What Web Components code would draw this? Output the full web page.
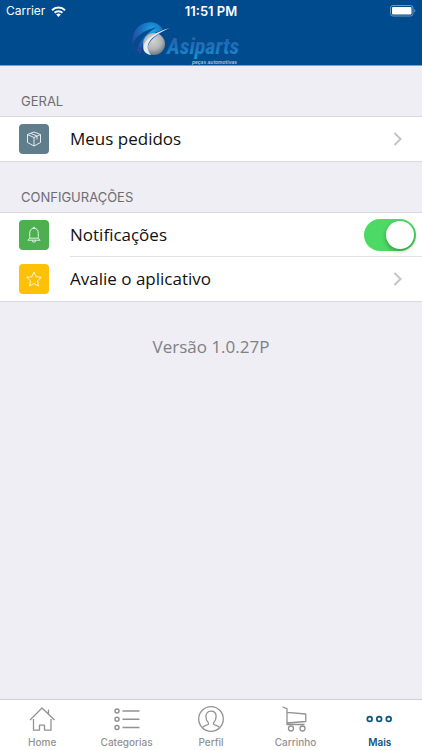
<!DOCTYPE html>
<html lang="pt-BR">
<head>
<meta charset="utf-8">
<meta name="viewport" content="width=device-width, initial-scale=1">
<title>Asiparts</title>
<style>
  :root {
    --as-brand: #004b8d;
    --as-bg: #efeef4;
    --as-line: #d9d9de;
    --as-muted: #6d6d72;
    --as-tab: #929292;
    --as-tab-active: #11587e;
    --as-ui: Inter, "Liberation Sans", sans-serif;
    --as-text: "Open Sans", "Noto Sans", sans-serif;
  }
  body { margin: 0; background: var(--as-bg); }
</style>
</head>
<body>
<as-app>
  <as-header slot="header" carrier="Carrier" time="11:51 PM"></as-header>
  <as-group label="Geral">
    <as-row label="Meus pedidos" icon="box" color="#607d8b"></as-row>
  </as-group>
  <as-group label="Configurações">
    <as-row label="Notificações" icon="bell" color="#4caf50" toggle></as-row>
    <as-row label="Avalie o aplicativo" icon="star" color="#ffc107"></as-row>
  </as-group>
  <as-version>Versão 1.0.27P</as-version>
  <as-tabbar slot="footer">
    <as-tab icon="home">Home</as-tab>
    <as-tab icon="list">Categorias</as-tab>
    <as-tab icon="user">Perfil</as-tab>
    <as-tab icon="cart">Carrinho</as-tab>
    <as-tab icon="more" active>Mais</as-tab>
  </as-tabbar>
</as-app>

<script>
// Line icons, all stroked with currentColor.
const ICONS = {
  box: `<svg width="18" height="18" viewBox="0 0 18 18"><path d="M9 2 15.500 4.500V12.500L9 16 2.500 12.500V4.500ZM2.500 4.500 9 7.500 15.500 4.500M9 7.500V16M5.500 3.300 12 6V9.500"/></svg>`,
  bell: `<svg width="18" height="18" viewBox="0 0 18 18"><path d="M8 2.200a1 1 0 0 1 2 0M2.800 14.200c1.400-.8 1.900-2 1.900-3.700V7.300C4.700 4.200 6.300 2.300 9 2.300S13.300 4.200 13.300 7.300v3.200c0 1.700.5 2.900 1.900 3.700ZM4.500 12.200h9M7.200 14.400a1.800 1.800 0 0 0 3.600 0"/></svg>`,
  star: `<svg width="18" height="18" viewBox="0 0 18 18"><path d="m9 2 2.100 4.700 5.200.6-3.800 3.600 1 5.100L9 13.500 4.500 16l1-5.100L1.700 7.300l5.200-.6Z"/></svg>`,
  home: `<svg width="28" height="28" viewBox="0 0 28 28"><path d="M2 15 14 3 26.500 15M20.500 9V4.500M5.500 14V25.200H11.500V20.200H16.500V25.200H23V14"/></svg>`,
  list: `<svg width="28" height="28" viewBox="0 0 28 28"><g stroke-width="1.500"><circle cx="4" cy="6" r="2"/><circle cx="4" cy="14.300" r="2"/><circle cx="4" cy="22.600" r="2"/><path d="M9.500 6H26.500M9.500 14.300H26.500M9.500 22.600H26.500"/></g></svg>`,
  user: `<svg width="28" height="28" viewBox="0 0 28 28"><circle cx="14" cy="14" r="12.300"/><path d="M5.500 22.500c1-1.500 2.800-1.900 4.600-2.500 1.500-.5 1.700-1.600 1-2.700-1.600-1.500-2.200-3.200-2.200-5.800C8.900 8.200 10.900 6.200 14 6.200s5.100 2 5.100 5.300c0 2.600-.6 4.300-2.200 5.800-.7 1.100-.5 2.200 1 2.700 1.800.6 3.600 1 4.600 2.500"/></svg>`,
  cart: `<svg width="28" height="28" viewBox="0 0 28 28"><path d="M1.500 2 6 3.600V19.500H23.500M6 7.300 24.800 9V16.500L6 18"/><circle cx="10" cy="23.500" r="2.500"/><circle cx="21.500" cy="23.500" r="2.500"/></svg>`,
  more: `<svg width="28" height="28" viewBox="0 0 28 28"><g stroke-width="1.700"><circle cx="3.700" cy="14" r="2.400"/><circle cx="13.200" cy="14" r="2.400"/><circle cx="22.700" cy="14" r="2.400"/></g></svg>`,
};

const ICON_CSS = `svg { display: block; fill: none; stroke: currentColor; stroke-linejoin: round; }`;

class AsElement extends HTMLElement {
  constructor() {
    super();
    this.attachShadow({ mode: "open" });
  }
  connectedCallback() {
    this.shadowRoot.innerHTML = this.render();
  }
}

class AsApp extends AsElement {
  render() {
    return `
      <style>
        :host { display: flex; flex-direction: column; min-height: 100vh; }
        main { flex: 1; }
      </style>
      <slot name="header"></slot>
      <main><slot></slot></main>
      <slot name="footer"></slot>`;
  }
}

class AsHeader extends AsElement {
  render() {
    return `
      <style>
        :host {
          display: block; background: var(--as-brand); color: #fff;
          border-bottom: 1px solid #7d9fc4; font: 12px/22px var(--as-ui);
        }
        .status {
          display: grid; grid-template-columns: 1fr auto 1fr; align-items: center;
          height: 22px; padding: 0 6px;
        }
        .carrier { display: flex; align-items: center; gap: 6px; }
        time { font-weight: 600; font-size: 13px; }
        .battery { justify-self: end; }
        svg { display: block; }
        .logo { margin: 0 auto; }
      </style>
      <header>
        <div class="status">
          <span class="carrier">${this.getAttribute("carrier")}
            <svg width="15" height="11" viewBox="0 0 15 11" aria-label="Wi-Fi">
              <g fill="none" stroke="#fff" stroke-width="2">
                <path d="M1 4.200a9.200 9.200 0 0 1 13 0"/><path d="M3.600 6.800a5.500 5.500 0 0 1 7.800 0"/>
              </g>
              <path fill="#fff" d="M5.200 8.600a3.300 3.300 0 0 1 4.600 0L7.500 11Z"/>
            </svg>
          </span>
          <time>${this.getAttribute("time")}</time>
          <svg class="battery" width="26" height="12" viewBox="0 0 26 12" aria-label="Bateria">
            <rect x=".5" y=".5" width="22.500" height="10.500" rx="2.500" fill="none" stroke="#6f98c0"/>
            <rect x="2" y="2" width="19.500" height="7.500" rx="1" fill="#fff"/>
            <path d="M24.200 4a2 2 0 0 1 0 3.600Z" fill="#6f98c0"/>
          </svg>
        </div>
        <svg class="logo" width="158" height="43" viewBox="0 0 158 43" role="img" aria-label="Asiparts peças automotivas">
          <defs>
            <radialGradient id="globe" cx=".65" cy=".25" r=".7">
              <stop offset="0" stop-color="#1fa6e0"/><stop offset=".5" stop-color="#1770c0"/><stop offset="1" stop-color="#28479c"/>
            </radialGradient>
            <radialGradient id="ball" cx=".45" cy=".35" r=".65">
              <stop offset="0" stop-color="#d4d4d4"/><stop offset=".6" stop-color="#b2b4b7"/><stop offset="1" stop-color="#6d7a88"/>
            </radialGradient>
            <linearGradient id="word" x1="0" y1="0" x2="0" y2="1">
              <stop offset="0" stop-color="#3659ab"/><stop offset=".5" stop-color="#1d70bb"/><stop offset="1" stop-color="#1b94d2"/>
            </linearGradient>
          </defs>
          <path fill="url(#globe)" d="M9 32C1 27-2 19 2 11 7-1 25-4 31 8 19 11 9 20 9 32Z"/>
          <path fill="#07498d" d="M1 21C5 13 13 8 25 5 15 11 8 17 5 28 3 26 1 24 1 21Z"/>
          <circle cx="22" cy="22" r="11" fill="url(#ball)"/>
          <path fill="#0a4888" d="M13 30C11 20 19 11 37 6 22 14 14 20 15 32Z"/>
          <path fill="#e4edf5" d="M19 33C6 31 8 14 38 6 21 13 10 22 19 33Z"/>
          <text x="35" y="32" fill="url(#word)" font-family="'Roboto Condensed', 'Liberation Sans', sans-serif" font-style="italic" font-weight="bold" font-size="22">Asiparts</text>
          <text x="60" y="42" fill="#a9bfd8" font-family="'Liberation Sans', sans-serif" font-style="italic" font-weight="bold" font-size="5">peças automotivas</text>
        </svg>
      </header>`;
  }
}

class AsGroup extends AsElement {
  render() {
    return `
      <style>
        :host { display: block; }
        h2 {
          margin: 0; padding: 26px 21px 6px; color: var(--as-muted);
          font: 13px/18px var(--as-ui); text-transform: uppercase;
        }
        .rows {
          background: #fff;
          border-top: 1px solid var(--as-line); border-bottom: 1px solid var(--as-line);
        }
      </style>
      <section>
        <h2>${this.getAttribute("label")}</h2>
        <div class="rows"><slot></slot></div>
      </section>`;
  }
}

class AsRow extends AsElement {
  render() {
    const toggle = this.hasAttribute("toggle");
    const tag = toggle ? "label" : "a";
    return `
      <style>
        ${ICON_CSS}
        :host { display: block; --_line: #e3e3e6; }
        .row {
          display: flex; align-items: center; gap: 21px;
          padding-left: 19px; color: #111; text-decoration: none;
          font: 17px/24px var(--as-text); cursor: pointer;
        }
        .tile {
          display: grid; place-items: center; width: 30px; height: 30px;
          border-radius: 4px; background: ${this.getAttribute("color")}; color: #fff;
        }
        .tile svg { stroke-width: 1; opacity: .85; }
        .body {
          flex: 1; display: flex; align-items: center; justify-content: space-between;
          height: 43px; padding-right: 20px; border-bottom: 1px solid transparent;
        }
        :host(:not(:last-child)) .body { border-bottom-color: var(--_line); }
        .chevron { color: #c4c4c8; stroke-width: 2; stroke-linejoin: miter; }
        :host([toggle]) .body { padding-right: 6px; }
        input {
          appearance: none; box-sizing: border-box; width: 52px; height: 32px; margin: 0;
          padding: 2px; border-radius: 16px; background: #d9d9de; cursor: pointer;
          display: flex;
        }
        input::before {
          content: ""; width: 28px; height: 28px; border-radius: 50%;
          background: #fff; box-shadow: 0 2px 4px rgba(0, 0, 0, .3);
        }
        input:checked { background: #4cd964; justify-content: flex-end; }
      </style>
      <${tag} class="row" ${toggle ? 'for="switch"' : 'href="#"'}>
        <span class="tile">${ICONS[this.getAttribute("icon")]}</span>
        <span class="body">
          <span>${this.getAttribute("label")}</span>
          ${toggle
            ? `<input id="switch" type="checkbox" role="switch" checked>`
            : `<svg class="chevron" width="9" height="14" viewBox="0 0 9 14"><path d="M1.500 1 7.500 7 1.500 13"/></svg>`}
        </span>
      </${tag}>`;
  }
}

class AsVersion extends AsElement {
  render() {
    return `
      <style>
        :host {
          display: block; padding: 33px 16px; text-align: center;
          color: #808084; font: 17px/24px var(--as-text);
        }
      </style>
      <slot></slot>`;
  }
}

class AsTabbar extends AsElement {
  render() {
    return `
      <style>
        :host { display: block; position: sticky; bottom: 0; background: #fff; border-top: 1px solid #cfcfd4; }
        nav { display: flex; height: 50px; }
      </style>
      <nav><slot></slot></nav>`;
  }
}

class AsTab extends AsElement {
  render() {
    return `
      <style>
        ${ICON_CSS}
        :host { display: block; flex: 1 1 0; color: var(--as-tab); }
        :host([active]) { color: var(--as-tab-active); }
        a {
          display: flex; flex-direction: column; align-items: center; gap: 2px;
          padding-top: 5px; color: inherit; text-decoration: none;
          font: 500 10px/14px var(--as-ui);
        }
        :host([active]) a { font-weight: 600; }
        svg { stroke-width: 1.3; }
      </style>
      <a href="#" ${this.hasAttribute("active") ? 'aria-current="page"' : ""}>
        ${ICONS[this.getAttribute("icon")]}
        <span><slot></slot></span>
      </a>`;
  }
}

customElements.define("as-app", AsApp);
customElements.define("as-header", AsHeader);
customElements.define("as-group", AsGroup);
customElements.define("as-row", AsRow);
customElements.define("as-version", AsVersion);
customElements.define("as-tabbar", AsTabbar);
customElements.define("as-tab", AsTab);
</script>
</body>
</html>
